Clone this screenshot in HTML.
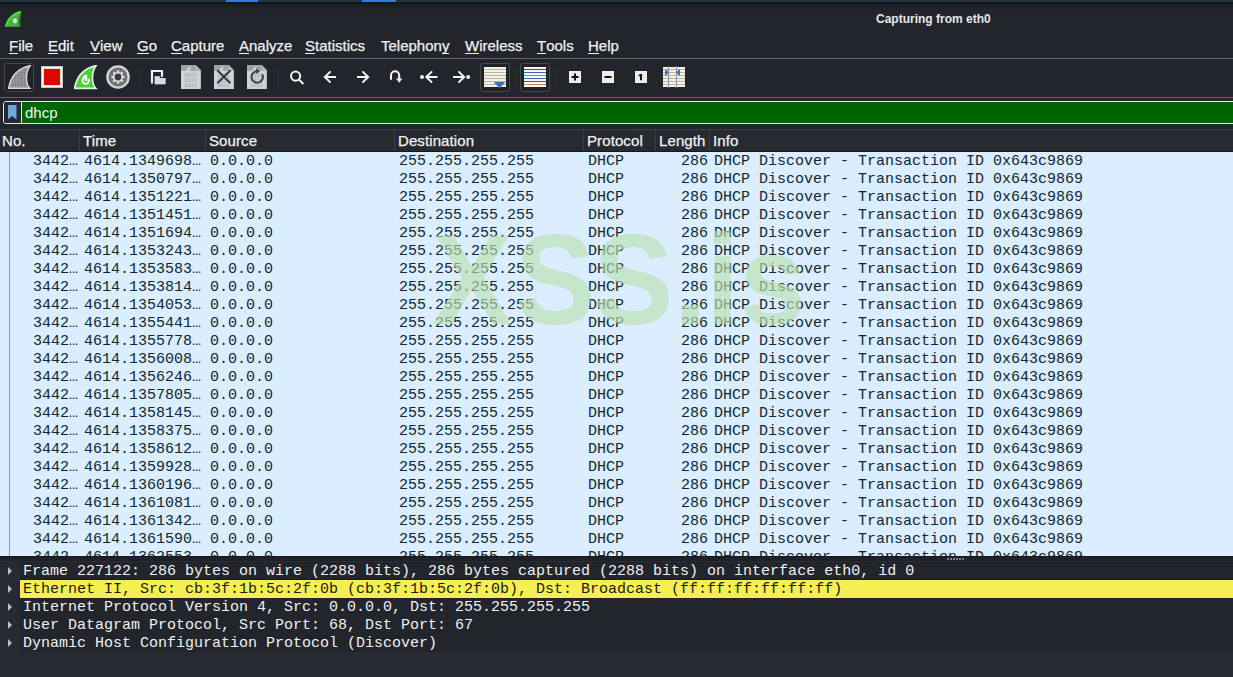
<!DOCTYPE html><html><head><meta charset="utf-8"><style>
*{margin:0;padding:0;box-sizing:border-box}
html,body{width:1233px;height:677px;overflow:hidden;background:#22252c;position:relative}
body{font-family:"Liberation Sans",sans-serif;color:#eee}
.a{position:absolute}
.menu{position:absolute;top:37px;font-size:15px;line-height:18px;color:#f0f0f0;white-space:pre;-webkit-text-stroke:0.25px #f0f0f0}
.menu u{text-decoration:none;position:relative}
.menu u:after{content:"";position:absolute;left:0;right:0;top:16px;height:1px;background:#f0f0f0}
.hdr{position:absolute;top:130px;height:22px;font-size:15px;line-height:22px;color:#f2f2f2;white-space:pre;-webkit-text-stroke:0.25px #f2f2f2;letter-spacing:0.1px}
.row{position:absolute;left:0;width:1233px;height:18px;background:#daeeff;font-family:"Liberation Mono",monospace;font-size:15px;line-height:18px;color:#12272e;white-space:pre}
.row span{position:absolute;top:1px}
.det{position:absolute;left:20px;width:1213px;height:18px;font-family:"Liberation Mono",monospace;font-size:15px;line-height:18px;color:#f0f0f0;white-space:pre}
.det span{position:absolute;left:3px;top:1px}
.tri{position:absolute;left:8px;width:0;height:0;border-left:4.5px solid #bcbec1;border-top:4.2px solid transparent;border-bottom:4.2px solid transparent}
</style></head><body>
<div class="a" style="left:0;top:0;width:1233px;height:2px;background:#243343"></div>
<div class="a" style="left:226px;top:0;width:32px;height:2px;background:#2a7af2"></div>
<div class="a" style="left:362px;top:0;width:34px;height:2px;background:#2a7af2"></div>
<div class="a" style="left:0;top:2px;width:1233px;height:2px;background:#131418"></div>
<div class="a" style="left:0;top:4px;width:1233px;height:8px;background:linear-gradient(#1c1e24,#22252c)"></div>
<div class="a" style="left:876px;top:12px;font-size:12px;line-height:15px;font-weight:bold;color:#e6e6e6;white-space:pre">Capturing from eth0</div>
<svg class="a" style="left:4px;top:10px" width="18" height="18" viewBox="0 0 18 18"><path d="M1 16.8 C2.5 9 8 3 17.2 0.8 C16.2 6 15.8 11 16.4 16.8 Z" fill="#4aae3e"/><path d="M1 16.8 C2.5 9 8 3 17.2 0.8 L16 3 C9 5.5 4.5 10 2.5 16.8 Z" fill="#55dd40"/><path d="M17.2 0.8 C16.2 6 15.8 11 16.4 16.8 L14.6 16.8 C14 11 14.5 6 17.2 0.8 Z" fill="#168f18"/><circle cx="11" cy="11" r="2.4" fill="#c9dfe4"/><circle cx="11" cy="9.6" r="1.1" fill="#eaf3ea"/></svg>
<div class="menu" style="left:9px"><u>F</u>ile</div>
<div class="menu" style="left:48px"><u>E</u>dit</div>
<div class="menu" style="left:90px"><u>V</u>iew</div>
<div class="menu" style="left:137px"><u>G</u>o</div>
<div class="menu" style="left:171px"><u>C</u>apture</div>
<div class="menu" style="left:239px"><u>A</u>nalyze</div>
<div class="menu" style="left:305px"><u>S</u>tatistics</div>
<div class="menu" style="left:381px">Telephon<u>y</u></div>
<div class="menu" style="left:465px"><u>W</u>ireless</div>
<div class="menu" style="left:537px"><u>T</u>ools</div>
<div class="menu" style="left:588px"><u>H</u>elp</div>
<div class="a" style="left:0;top:58px;width:1233px;height:1px;background:#606267"></div>
<div class="a" style="left:0;top:97px;width:1233px;height:1px;background:#606267"></div>
<div class="a" style="left:4px;top:63px;width:30px;height:29px;border:1px solid #4a4843;border-radius:3px;background:#1f2228"></div>
<div class="a" style="left:480px;top:63px;width:30px;height:29px;border:1px solid #4a4843;border-radius:3px;background:#1f2228"></div>
<div class="a" style="left:520px;top:63px;width:30px;height:29px;border:1px solid #4a4843;border-radius:3px;background:#1f2228"></div>
<svg class="a" style="left:8px;top:65px" width="24" height="25" viewBox="0 0 24 25"><defs><pattern id="dots" width="3" height="3" patternUnits="userSpaceOnUse"><rect width="3" height="3" fill="#939395"/><circle cx="1.5" cy="1.5" r="0.55" fill="#6a6a6c"/></pattern></defs><path d="M0.6 23.3 C2.5 12 9 3.5 22.2 0.6 C19.2 4.5 18.2 10 18.6 15 C18.9 18.5 20 21.5 21.8 23.3 Z" fill="url(#dots)" stroke="#d8dcdf" stroke-width="1.4"/></svg>
<div class="a" style="left:41px;top:66px;width:22px;height:22px;background:#f6f7f8;border:1px solid #c4c7ca"></div>
<div class="a" style="left:44px;top:69px;width:16px;height:16px;background:#dc0700;box-shadow:0 0 0 0.6px #f2cda8"></div>
<svg class="a" style="left:74px;top:65px" width="24" height="25" viewBox="0 0 24 25"><path d="M0.6 23.3 C2.5 12 9 3.5 22.2 0.6 C19.2 4.5 18.2 10 18.6 15 C18.9 18.5 20 21.5 21.8 23.3 Z" fill="#46d42d" stroke="#e6e8ea" stroke-width="1.7"/><path d="M14.47 14.0 A3.2 3.2 0 1 1 10.6 12.6" fill="none" stroke="#f6f6f6" stroke-width="2"/><rect x="10.7" y="9.8" width="2.5" height="6.2" fill="#f6f6f6"/><path d="M8 12.3 L10.9 9.4 L10.9 12.8 Z" fill="#f6f6f6"/></svg>
<svg class="a" style="left:106px;top:65px" width="24" height="24" viewBox="-12 -12 24 24"><circle r="11.8" fill="#d5d8da"/><circle r="9.5" fill="#727272"/><circle r="5.1" fill="#e2e2e2"/><rect x="-1.1" y="-6.6" width="2.2" height="2.4" fill="#dedede" transform="rotate(0)"/><rect x="-1.1" y="-6.6" width="2.2" height="2.4" fill="#dedede" transform="rotate(45)"/><rect x="-1.1" y="-6.6" width="2.2" height="2.4" fill="#dedede" transform="rotate(90)"/><rect x="-1.1" y="-6.6" width="2.2" height="2.4" fill="#dedede" transform="rotate(135)"/><rect x="-1.1" y="-6.6" width="2.2" height="2.4" fill="#dedede" transform="rotate(180)"/><rect x="-1.1" y="-6.6" width="2.2" height="2.4" fill="#dedede" transform="rotate(225)"/><rect x="-1.1" y="-6.6" width="2.2" height="2.4" fill="#dedede" transform="rotate(270)"/><rect x="-1.1" y="-6.6" width="2.2" height="2.4" fill="#dedede" transform="rotate(315)"/><circle r="3.4" fill="#3a3d44"/></svg>
<div class="a" style="left:139px;top:68px;width:1px;height:19px;background:#2c2f36"></div>
<div class="a" style="left:278px;top:68px;width:1px;height:19px;background:#2c2f36"></div>
<div class="a" style="left:516px;top:68px;width:1px;height:19px;background:#2c2f36"></div>
<div class="a" style="left:556px;top:68px;width:1px;height:19px;background:#2c2f36"></div>
<svg class="a" style="left:150px;top:69px" width="17" height="17" viewBox="0 0 17 17"><path d="M2 14.5 V2 H12 V8" fill="none" stroke="#eef0f4" stroke-width="2.2"/><path d="M4 15.9 V6.6 H9.6 L10.6 8.4 H16.2 V15.9 Z" fill="#d6dbe0" stroke="#15171c" stroke-width="1"/></svg>
<svg class="a" style="left:181px;top:65px" width="20" height="24" viewBox="0 0 20 24"><path d="M0 0 H14.5 L20 5.5 V24 H0 Z" fill="#cfd3d7"/><path d="M0 0 H14.5 L20 5.5 V5.8 H0 Z" fill="#9fa3a7"/><path d="M5 5.8 C6 3 8 1.5 10 1.2 C9 3 9 4.5 9.5 5.8 Z" fill="#c9ced3"/><path d="M14.5 0 V5.5 H20 Z" fill="#b5b9bd"/><rect x="19" y="5.5" width="1" height="18.5" fill="#b8b8ae"/><g fill="#6f9c8c" opacity="0.75" font-family="Liberation Mono" font-size="5"><text x="3.5" y="12">0101</text><text x="3.5" y="17">0110</text><text x="3.5" y="22">0111</text></g></svg>
<svg class="a" style="left:214px;top:65px" width="20" height="24" viewBox="0 0 20 24"><path d="M0 0 H14.5 L20 5.5 V24 H0 Z" fill="#cfd3d7"/><path d="M0 0 H14.5 L20 5.5 V5.8 H0 Z" fill="#9fa3a7"/><path d="M5 5.8 C6 3 8 1.5 10 1.2 C9 3 9 4.5 9.5 5.8 Z" fill="#c9ced3"/><path d="M14.5 0 V5.5 H20 Z" fill="#b5b9bd"/><rect x="19" y="5.5" width="1" height="18.5" fill="#b8b8ae"/><g fill="#6f9c8c" opacity="0.75" font-family="Liberation Mono" font-size="5"><text x="3.5" y="12">0101</text><text x="3.5" y="17">0110</text><text x="3.5" y="22">0111</text></g><path d="M3.3 5.3 L16.5 18.3 M16.5 5.3 L3.3 18.3" stroke="#393939" stroke-width="2"/></svg>
<svg class="a" style="left:247px;top:65px" width="20" height="24" viewBox="0 0 20 24"><path d="M0 0 H14.5 L20 5.5 V24 H0 Z" fill="#cfd3d7"/><path d="M0 0 H14.5 L20 5.5 V5.8 H0 Z" fill="#9fa3a7"/><path d="M5 5.8 C6 3 8 1.5 10 1.2 C9 3 9 4.5 9.5 5.8 Z" fill="#c9ced3"/><path d="M14.5 0 V5.5 H20 Z" fill="#b5b9bd"/><rect x="19" y="5.5" width="1" height="18.5" fill="#b8b8ae"/><g fill="#6f9c8c" opacity="0.75" font-family="Liberation Mono" font-size="5"><text x="3.5" y="12">0101</text><text x="3.5" y="17">0110</text><text x="3.5" y="22">0111</text></g><path d="M15.2 9.2 A5.7 5.7 0 1 1 10 6.3" fill="none" stroke="#404040" stroke-width="2"/><path d="M9.2 3.3 L13 6.2 L9.2 9 Z" fill="#404040"/></svg>
<svg class="a" style="left:288px;top:69px" width="18" height="17" viewBox="0 0 18 17"><circle cx="7.6" cy="7.1" r="4.6" fill="none" stroke="#f4f4f4" stroke-width="2"/><path d="M10.8 10.4 L15.4 15" stroke="#f4f4f4" stroke-width="2"/></svg>
<svg class="a" style="left:323px;top:70px" width="14" height="14" viewBox="0 0 14 14"><path d="M1.8 7 H13 M7.6 1.4 L1.8 7 L7.6 12.6" fill="none" stroke="#f4f4f4" stroke-width="2"/></svg>
<svg class="a" style="left:357px;top:70px" width="14" height="14" viewBox="0 0 14 14"><path d="M0 7 H11.2 M5.4 1.4 L11.2 7 L5.4 12.6" fill="none" stroke="#f4f4f4" stroke-width="2"/></svg>
<svg class="a" style="left:389px;top:70px" width="15" height="14" viewBox="0 0 15 14"><path d="M2 9.8 V5.3 A4.1 4.1 0 0 1 10.2 5.3 V9.4" fill="none" stroke="#f4f4f4" stroke-width="2"/><path d="M7 8.6 L10.2 12.8 L13.4 8.6 Z" fill="#f4f4f4"/></svg>
<svg class="a" style="left:419px;top:70px" width="20" height="14" viewBox="0 0 20 14"><circle cx="3" cy="7" r="2" fill="#f4f4f4"/><g transform="translate(5.5,0)"><path d="M1.8 7 H13 M7.6 1.4 L1.8 7 L7.6 12.6" fill="none" stroke="#f4f4f4" stroke-width="2"/></g></svg>
<svg class="a" style="left:453px;top:70px" width="20" height="14" viewBox="0 0 20 14"><path d="M0 7 H11.2 M5.4 1.4 L11.2 7 L5.4 12.6" fill="none" stroke="#f4f4f4" stroke-width="2"/><circle cx="15.2" cy="7" r="2" fill="#f4f4f4"/></svg>
<svg class="a" style="left:484px;top:67px" width="22" height="22" viewBox="0 0 22 22"><rect width="22" height="20" fill="#f3f1e9"/><rect x="0" y="2.0" width="23" height="1" fill="#b9b59c"/><rect x="0" y="5.0" width="23" height="1" fill="#b9b59c"/><rect x="0" y="8.0" width="23" height="1" fill="#b9b59c"/><rect x="0" y="11.0" width="23" height="1" fill="#b9b59c"/><rect x="0" y="14.0" width="23" height="1" fill="#b9b59c"/><rect x="0" y="17.0" width="23" height="1" fill="#b9b59c"/><path d="M10.2 15.8 Q9.6 14.9 10.8 14.9 H20.2 Q21.4 14.9 20.8 15.8 L16.2 20.6 Q15.5 21.3 14.8 20.6 Z" fill="#3770bd"/></svg>
<svg class="a" style="left:524px;top:67px" width="22" height="20" viewBox="0 0 22 20"><rect width="22" height="20" fill="#f8f6f6"/><rect x="0" y="2.0" width="22" height="1" fill="#e01010"/><rect x="0" y="5.0" width="22" height="1" fill="#3a6bb0"/><rect x="0" y="8.0" width="22" height="1" fill="#3cc83c"/><rect x="0" y="11.0" width="22" height="1" fill="#3a6bb0"/><rect x="0" y="14.0" width="22" height="1" fill="#6b4f3b"/><rect x="0" y="17.0" width="22" height="1" fill="#c88f4c"/></svg>
<svg class="a" style="left:569px;top:71px" width="12" height="12" viewBox="0 0 12 12"><rect width="12" height="12" fill="#eeede6"/><path d="M2.5 6 H9.5 M6 2.5 V9.5" stroke="#111" stroke-width="2"/></svg>
<svg class="a" style="left:602px;top:71px" width="12" height="12" viewBox="0 0 12 12"><rect width="12" height="12" fill="#eeede6"/><path d="M2.5 6 H9.5" stroke="#111" stroke-width="2"/></svg>
<svg class="a" style="left:635px;top:71px" width="12" height="12" viewBox="0 0 12 12"><rect width="12" height="12" fill="#eeede6"/><path d="M5 3 H7 V9.3 H5 V5 L3.6 5.6 V4.2 Z" fill="#111"/></svg>
<svg class="a" style="left:663px;top:66px" width="22" height="23" viewBox="0 0 22 23"><rect y="1" width="22" height="20" fill="#f3f1e9"/><rect x="0" y="3" width="22" height="1" fill="#bab69c"/><rect x="0" y="6" width="22" height="1" fill="#bab69c"/><rect x="0" y="9" width="22" height="1" fill="#bab69c"/><rect x="0" y="12" width="22" height="1" fill="#bab69c"/><rect x="0" y="15" width="22" height="1" fill="#bab69c"/><rect x="0" y="18" width="22" height="1" fill="#bab69c"/><rect x="5" y="0" width="1" height="22" fill="#8e9196"/><rect x="13" y="0" width="1" height="22" fill="#8e9196"/><path d="M2 4 Q2 3 3 3.6 L6 6.5 L3 9.4 Q2 10 2 9 Z" fill="#3b76c4"/><path d="M17 4 Q17 3 16 3.6 L13.2 6.5 L16 9.4 Q17 10 17 9 Z" fill="#3b76c4"/></svg>
<div class="a" style="left:3px;top:101px;width:1240px;height:23px;border:1px solid #e8e4e0;border-radius:3px;background:#006400"></div>
<div class="a" style="left:4px;top:102px;width:17px;height:21px;background:#262932;border-radius:2px 0 0 2px"></div>
<div class="a" style="left:21px;top:102px;width:1px;height:21px;background:#e8e4e0"></div>
<svg class="a" style="left:8px;top:105px" width="9" height="15" viewBox="0 0 9 15"><path d="M0 0 H8.5 V14.5 L4.25 11 L0 14.5 Z" fill="#6fa7dc"/></svg>
<div class="a" style="left:25px;top:104px;font-size:15px;line-height:18px;color:#f4f4f4">dhcp</div>
<div class="a" style="left:0;top:129px;width:1233px;height:22px;background:#272a31;border-top:1px solid #3d4046"></div>
<div class="a" style="left:0;top:151px;width:1233px;height:1px;background:#16181d"></div>
<div class="a" style="left:79px;top:130px;width:1px;height:21px;background:#3a3d43"></div>
<div class="a" style="left:205px;top:130px;width:1px;height:21px;background:#3a3d43"></div>
<div class="a" style="left:394px;top:130px;width:1px;height:21px;background:#3a3d43"></div>
<div class="a" style="left:583px;top:130px;width:1px;height:21px;background:#3a3d43"></div>
<div class="a" style="left:655px;top:130px;width:1px;height:21px;background:#3a3d43"></div>
<div class="a" style="left:709px;top:130px;width:1px;height:21px;background:#3a3d43"></div>
<div class="hdr" style="left:2px">No.</div>
<div class="hdr" style="left:83px">Time</div>
<div class="hdr" style="left:209px">Source</div>
<div class="hdr" style="left:398px">Destination</div>
<div class="hdr" style="left:587px">Protocol</div>
<div class="hdr" style="left:659px">Length</div>
<div class="hdr" style="left:713px">Info</div>
<div class="a" style="left:0;top:152px;width:1233px;height:404px;overflow:hidden">
<div class="row" style="top:0px"><span style="left:33px">3442…</span><span style="left:84px">4614.1349698…</span><span style="left:210px">0.0.0.0</span><span style="left:399px">255.255.255.255</span><span style="left:588px">DHCP</span><span style="left:681px">286</span><span style="left:714px">DHCP Discover - Transaction ID 0x643c9869</span></div>
<div class="row" style="top:18px"><span style="left:33px">3442…</span><span style="left:84px">4614.1350797…</span><span style="left:210px">0.0.0.0</span><span style="left:399px">255.255.255.255</span><span style="left:588px">DHCP</span><span style="left:681px">286</span><span style="left:714px">DHCP Discover - Transaction ID 0x643c9869</span></div>
<div class="row" style="top:36px"><span style="left:33px">3442…</span><span style="left:84px">4614.1351221…</span><span style="left:210px">0.0.0.0</span><span style="left:399px">255.255.255.255</span><span style="left:588px">DHCP</span><span style="left:681px">286</span><span style="left:714px">DHCP Discover - Transaction ID 0x643c9869</span></div>
<div class="row" style="top:54px"><span style="left:33px">3442…</span><span style="left:84px">4614.1351451…</span><span style="left:210px">0.0.0.0</span><span style="left:399px">255.255.255.255</span><span style="left:588px">DHCP</span><span style="left:681px">286</span><span style="left:714px">DHCP Discover - Transaction ID 0x643c9869</span></div>
<div class="row" style="top:72px"><span style="left:33px">3442…</span><span style="left:84px">4614.1351694…</span><span style="left:210px">0.0.0.0</span><span style="left:399px">255.255.255.255</span><span style="left:588px">DHCP</span><span style="left:681px">286</span><span style="left:714px">DHCP Discover - Transaction ID 0x643c9869</span></div>
<div class="row" style="top:90px"><span style="left:33px">3442…</span><span style="left:84px">4614.1353243…</span><span style="left:210px">0.0.0.0</span><span style="left:399px">255.255.255.255</span><span style="left:588px">DHCP</span><span style="left:681px">286</span><span style="left:714px">DHCP Discover - Transaction ID 0x643c9869</span></div>
<div class="row" style="top:108px"><span style="left:33px">3442…</span><span style="left:84px">4614.1353583…</span><span style="left:210px">0.0.0.0</span><span style="left:399px">255.255.255.255</span><span style="left:588px">DHCP</span><span style="left:681px">286</span><span style="left:714px">DHCP Discover - Transaction ID 0x643c9869</span></div>
<div class="row" style="top:126px"><span style="left:33px">3442…</span><span style="left:84px">4614.1353814…</span><span style="left:210px">0.0.0.0</span><span style="left:399px">255.255.255.255</span><span style="left:588px">DHCP</span><span style="left:681px">286</span><span style="left:714px">DHCP Discover - Transaction ID 0x643c9869</span></div>
<div class="row" style="top:144px"><span style="left:33px">3442…</span><span style="left:84px">4614.1354053…</span><span style="left:210px">0.0.0.0</span><span style="left:399px">255.255.255.255</span><span style="left:588px">DHCP</span><span style="left:681px">286</span><span style="left:714px">DHCP Discover - Transaction ID 0x643c9869</span></div>
<div class="row" style="top:162px"><span style="left:33px">3442…</span><span style="left:84px">4614.1355441…</span><span style="left:210px">0.0.0.0</span><span style="left:399px">255.255.255.255</span><span style="left:588px">DHCP</span><span style="left:681px">286</span><span style="left:714px">DHCP Discover - Transaction ID 0x643c9869</span></div>
<div class="row" style="top:180px"><span style="left:33px">3442…</span><span style="left:84px">4614.1355778…</span><span style="left:210px">0.0.0.0</span><span style="left:399px">255.255.255.255</span><span style="left:588px">DHCP</span><span style="left:681px">286</span><span style="left:714px">DHCP Discover - Transaction ID 0x643c9869</span></div>
<div class="row" style="top:198px"><span style="left:33px">3442…</span><span style="left:84px">4614.1356008…</span><span style="left:210px">0.0.0.0</span><span style="left:399px">255.255.255.255</span><span style="left:588px">DHCP</span><span style="left:681px">286</span><span style="left:714px">DHCP Discover - Transaction ID 0x643c9869</span></div>
<div class="row" style="top:216px"><span style="left:33px">3442…</span><span style="left:84px">4614.1356246…</span><span style="left:210px">0.0.0.0</span><span style="left:399px">255.255.255.255</span><span style="left:588px">DHCP</span><span style="left:681px">286</span><span style="left:714px">DHCP Discover - Transaction ID 0x643c9869</span></div>
<div class="row" style="top:234px"><span style="left:33px">3442…</span><span style="left:84px">4614.1357805…</span><span style="left:210px">0.0.0.0</span><span style="left:399px">255.255.255.255</span><span style="left:588px">DHCP</span><span style="left:681px">286</span><span style="left:714px">DHCP Discover - Transaction ID 0x643c9869</span></div>
<div class="row" style="top:252px"><span style="left:33px">3442…</span><span style="left:84px">4614.1358145…</span><span style="left:210px">0.0.0.0</span><span style="left:399px">255.255.255.255</span><span style="left:588px">DHCP</span><span style="left:681px">286</span><span style="left:714px">DHCP Discover - Transaction ID 0x643c9869</span></div>
<div class="row" style="top:270px"><span style="left:33px">3442…</span><span style="left:84px">4614.1358375…</span><span style="left:210px">0.0.0.0</span><span style="left:399px">255.255.255.255</span><span style="left:588px">DHCP</span><span style="left:681px">286</span><span style="left:714px">DHCP Discover - Transaction ID 0x643c9869</span></div>
<div class="row" style="top:288px"><span style="left:33px">3442…</span><span style="left:84px">4614.1358612…</span><span style="left:210px">0.0.0.0</span><span style="left:399px">255.255.255.255</span><span style="left:588px">DHCP</span><span style="left:681px">286</span><span style="left:714px">DHCP Discover - Transaction ID 0x643c9869</span></div>
<div class="row" style="top:306px"><span style="left:33px">3442…</span><span style="left:84px">4614.1359928…</span><span style="left:210px">0.0.0.0</span><span style="left:399px">255.255.255.255</span><span style="left:588px">DHCP</span><span style="left:681px">286</span><span style="left:714px">DHCP Discover - Transaction ID 0x643c9869</span></div>
<div class="row" style="top:324px"><span style="left:33px">3442…</span><span style="left:84px">4614.1360196…</span><span style="left:210px">0.0.0.0</span><span style="left:399px">255.255.255.255</span><span style="left:588px">DHCP</span><span style="left:681px">286</span><span style="left:714px">DHCP Discover - Transaction ID 0x643c9869</span></div>
<div class="row" style="top:342px"><span style="left:33px">3442…</span><span style="left:84px">4614.1361081…</span><span style="left:210px">0.0.0.0</span><span style="left:399px">255.255.255.255</span><span style="left:588px">DHCP</span><span style="left:681px">286</span><span style="left:714px">DHCP Discover - Transaction ID 0x643c9869</span></div>
<div class="row" style="top:360px"><span style="left:33px">3442…</span><span style="left:84px">4614.1361342…</span><span style="left:210px">0.0.0.0</span><span style="left:399px">255.255.255.255</span><span style="left:588px">DHCP</span><span style="left:681px">286</span><span style="left:714px">DHCP Discover - Transaction ID 0x643c9869</span></div>
<div class="row" style="top:378px"><span style="left:33px">3442…</span><span style="left:84px">4614.1361590…</span><span style="left:210px">0.0.0.0</span><span style="left:399px">255.255.255.255</span><span style="left:588px">DHCP</span><span style="left:681px">286</span><span style="left:714px">DHCP Discover - Transaction ID 0x643c9869</span></div>
<div class="row" style="top:396px"><span style="left:33px">3442…</span><span style="left:84px">4614.1362553…</span><span style="left:210px">0.0.0.0</span><span style="left:399px">255.255.255.255</span><span style="left:588px">DHCP</span><span style="left:681px">286</span><span style="left:714px">DHCP Discover - Transaction ID 0x643c9869</span></div>
<div class="a" style="left:9px;top:0;width:1px;height:404px;background:#969aa3"></div>
</div>
<svg class="a" style="left:0;top:0" width="1233" height="677"><g transform="translate(0,324) scale(1,1.066)" font-family="Liberation Sans" font-weight="bold" font-size="120" fill="rgba(186,224,177,0.655)"><text x="432.1" y="0">X</text><text x="515.2" y="0">S</text><text x="593.2" y="0">S</text><text x="673.5" y="0">.</text><text x="705.8" y="0">i</text><text x="739.2" y="0">s</text></g></svg>
<div class="a" style="left:0;top:556px;width:1233px;height:1px;background:#15171c"></div>
<div class="a" style="left:0;top:557px;width:1233px;height:4px;background:#1f2128"></div>
<div class="a" style="left:0;top:561px;width:1233px;height:1px;background:#2a2c33"></div>
<div class="a" style="left:947px;top:558px;width:2px;height:2px;background:#7a7c80"></div>
<div class="a" style="left:950px;top:558px;width:2px;height:2px;background:#7a7c80"></div>
<div class="a" style="left:953px;top:558px;width:2px;height:2px;background:#7a7c80"></div>
<div class="a" style="left:956px;top:558px;width:2px;height:2px;background:#7a7c80"></div>
<div class="a" style="left:959px;top:558px;width:2px;height:2px;background:#7a7c80"></div>
<div class="a" style="left:962px;top:558px;width:2px;height:2px;background:#7a7c80"></div>
<div class="a" style="left:0;top:562px;width:1233px;height:115px;background:#272a31"></div>
<div class="a" style="left:20px;top:562px;width:1213px;height:90px;background:#22252c"></div>
<div class="det" style="top:562px"><span>Frame 227122: 286 bytes on wire (2288 bits), 286 bytes captured (2288 bits) on interface eth0, id 0</span></div>
<div class="tri" style="top:567px"></div>
<div class="a" style="left:20px;top:579px;width:1213px;height:1px;background:#1a1b22"></div>
<div class="det" style="top:580px;background:#f6ef52;color:#1a1a1a"><span>Ethernet II, Src: cb:3f:1b:5c:2f:0b (cb:3f:1b:5c:2f:0b), Dst: Broadcast (ff:ff:ff:ff:ff:ff)</span></div>
<div class="tri" style="top:585px"></div>
<div class="det" style="top:598px"><span>Internet Protocol Version 4, Src: 0.0.0.0, Dst: 255.255.255.255</span></div>
<div class="tri" style="top:603px"></div>
<div class="det" style="top:616px"><span>User Datagram Protocol, Src Port: 68, Dst Port: 67</span></div>
<div class="tri" style="top:621px"></div>
<div class="det" style="top:634px"><span>Dynamic Host Configuration Protocol (Discover)</span></div>
<div class="tri" style="top:639px"></div>
</body></html>
